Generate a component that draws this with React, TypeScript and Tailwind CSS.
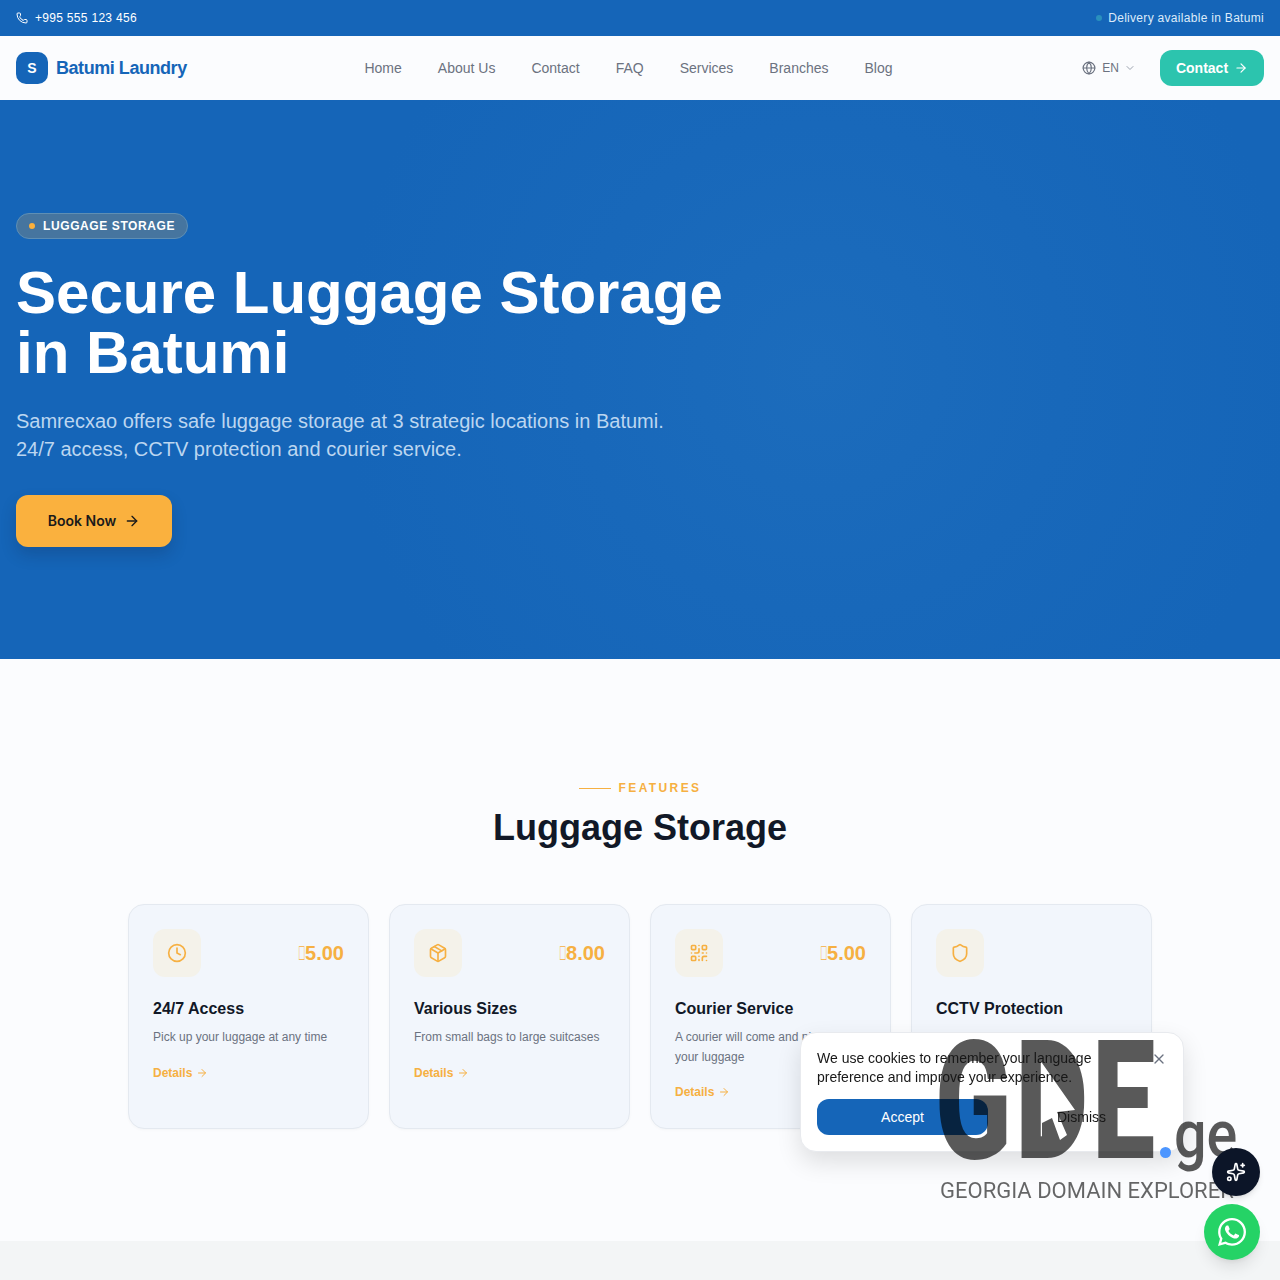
import { ArrowRight, ChevronDown, Clock, Globe, Package, Phone, QrCode, Shield, Sparkles, X } from "lucide-react";
import { FaWhatsapp } from "react-icons/fa";

const navLinks = ["Home", "About Us", "Contact", "FAQ", "Services", "Branches", "Blog"];

const features = [
  { title: "24/7 Access", text: "Pick up your luggage at any time", price: "5.00", Icon: Clock },
  { title: "Various Sizes", text: "From small bags to large suitcases", price: "8.00", Icon: Package },
  { title: "Courier Service", text: "A courier will come and pick up your luggage", price: "5.00", Icon: QrCode },
  { title: "CCTV Protection", text: "Your luggage is monitored around the clock", price: "", Icon: Shield },
];

const FeatureCard = ({ title, text, price, Icon }: (typeof features)[number]) => (
  <div className="rounded-2xl border border-[#e4e9f0] bg-[#f2f6fc] p-6 shadow-[0_1px_3px_rgba(15,23,42,0.03)]">
    <div className="flex items-center justify-between">
      <div className="flex h-12 w-12 items-center justify-center rounded-xl bg-[#f4f2ea]">
        <Icon className="h-5 w-5 text-[#f6b042]" strokeWidth={2} />
      </div>
      {price && (
        <span className="text-xl font-bold text-[#f6b042]">
          <span className="inline-block w-[7px] origin-left scale-x-50">{"\uE000"}</span>
          {price}
        </span>
      )}
    </div>
    <h3 className="mt-5 text-base leading-6 font-bold text-[#111827]">{title}</h3>
    <p className="mt-[7px] text-xs leading-[19.5px] text-[#6b7280]">{text}</p>
    <a className="mt-[15px] flex items-center gap-1 text-xs leading-5 font-bold text-[#f6b042]">
      Details <ArrowRight className="h-3 w-3" />
    </a>
  </div>
);

export default function App() {
  return (
    <div className="h-[1280px] overflow-hidden bg-[#fbfcfe] font-['Liberation_Sans',sans-serif]">
      {/* top bar */}
      <div className="flex h-9 items-center justify-between bg-[#1565b8] px-4 text-xs tracking-[0.3px] text-white">
        <div className="flex items-center gap-[7px]">
          <Phone className="h-3 w-3" />
          <span>+995 555 123 456</span>
        </div>
        <div className="flex items-center gap-1.5 text-[#dcebfa]">
          <span className="h-1.5 w-1.5 rounded-full bg-[#2a90bd]" />
          <span>Delivery available in Batumi</span>
        </div>
      </div>

      {/* nav */}
      <nav className="flex h-16 items-center justify-between bg-[#fbfcfe] px-4">
        <div className="flex w-[277px] items-center gap-2">
          <div className="flex h-8 w-8 items-center justify-center rounded-[10px] bg-[#1565b8] text-sm font-bold text-white">S</div>
          <span className="text-lg font-bold tracking-[-0.45px] text-[#1565b8]">Batumi Laundry</span>
        </div>
        <div className="flex items-center gap-9 text-sm text-[#6b7280]">
          {navLinks.map((link) => (
            <a key={link}>{link}</a>
          ))}
        </div>
        <div className="flex w-[300px] items-center justify-end">
          <div className="flex items-center text-xs text-[#6b7280]">
            <Globe className="mr-1.5 h-3.5 w-3.5" />
            <span className="mr-[5px]">EN</span>
            <ChevronDown className="h-3 w-3 text-[#9ca3af]" />
          </div>
          <button className="ml-6 flex h-9 w-[104px] items-center justify-center gap-1.5 rounded-xl bg-[#2cc4ae] text-sm font-bold text-white">
            Contact <ArrowRight className="h-3.5 w-3.5" />
          </button>
        </div>
      </nav>

      {/* hero */}
      <section className="h-[559px] bg-[#1565b8] bg-[radial-gradient(circle_at_64%_48%,#1c6cbc_0%,#1868ba_28%,#1565b8_55%)] px-4 pt-[113px]">
        <div className="flex h-[26px] w-[172px] items-center gap-2 rounded-full border border-[#5f8fb4] bg-[#46759f] pl-3 text-xs font-bold tracking-[0.6px] text-white">
          <span className="h-1.5 w-1.5 rounded-full bg-[#fbb03b]" />
          LUGGAGE STORAGE
        </div>
        <h1 className="mt-6 text-6xl leading-[60px] font-bold text-white">
          Secure Luggage Storage
          <br />
          in Batumi
        </h1>
        <p className="mt-6 text-xl leading-7 text-[#bcd6f0]">
          Samrecxao offers safe luggage storage at 3 strategic locations in Batumi.
          <br />
          24/7 access, CCTV protection and courier service.
        </p>
        <button className="mt-8 flex h-[52px] w-[156px] items-center justify-center gap-2 rounded-xl bg-[#fab13e] font-['Inter',sans-serif] text-sm font-semibold text-[#1a1a1a] shadow-[0_8px_16px_rgba(15,23,42,0.18)]">
          Book Now <ArrowRight className="h-4 w-4" />
        </button>
      </section>

      {/* features */}
      <section className="h-[582px] pt-[121px]">
        <div className="flex items-center justify-center gap-2">
          <span className="h-px w-8 bg-[#f6b042]" />
          <span className="text-xs leading-4 font-bold tracking-[2.4px] text-[#f6b042]">FEATURES</span>
        </div>
        <h2 className="mt-3 text-center text-4xl leading-10 font-bold text-[#111827]">Luggage Storage</h2>
        <div className="mx-auto mt-[56px] grid h-[225px] w-[1024px] grid-cols-4 gap-5">
          {features.map((feature) => (
            <FeatureCard key={feature.title} {...feature} />
          ))}
        </div>
      </section>

      <div className="h-[39px] bg-[#f3f5f6]" />

      {/* cookie panel: no stacking context of its own, so its texts sit over the watermark and the button under it */}
      <div className="absolute top-[1032px] left-[800px] h-[120px] w-[384px] rounded-2xl border border-[#e8eaee] bg-white p-4 shadow-[0_10px_25px_rgba(0,0,0,0.12)]">
        <div className="flex justify-between">
          <p className="relative z-30 w-[290px] text-sm leading-[19px] text-[#171717]">We use cookies to remember your language preference and improve your experience.</p>
          <X className="relative z-30 mt-0.5 h-4 w-4 text-[#6b7280]" />
        </div>
        <div className="mt-3 flex items-center">
          <button className="h-9 w-[171px] rounded-xl bg-[#1565b8] text-sm text-white">Accept</button>
          <span className="relative z-30 ml-[69px] text-sm text-[#171717]">Dismiss</span>
        </div>
      </div>

      {/* GDE.ge watermark */}
      <div className="pointer-events-none fixed top-[1030px] left-[935px] z-20 h-[175px] w-[310px]">
        <div className="absolute inset-0 opacity-65">
          <span className="absolute top-[-11.5px] left-0 origin-top-left scale-x-[0.68] font-['Roboto',sans-serif] text-[165px] leading-[165px] font-black tracking-[6px] text-black">GDE</span>
          {/* the D has no counter, only the pointer cut out of it */}
          <div className="absolute top-[30px] left-[107px] h-[78px] w-[30px] bg-black" />
        </div>
        <svg className="absolute top-[30px] left-[105px]" width="40" height="84" viewBox="0 0 40 84">
          <path d="M2 3 L35 50 L17 52 L27 75 L20 80 L12 58 L2 63 Z" fill="#ffffff" />
        </svg>
        <span className="absolute top-[117px] left-[225px] h-[11px] w-[11px] rounded-full bg-[#4d96ff]" />
        <span className="absolute top-[64.5px] left-[239px] origin-top-left scale-x-[0.87] font-['Roboto',sans-serif] text-[66px] leading-[80px] font-medium text-[#000000]/65">ge</span>
        <span className="absolute top-[147px] left-[5px] font-['Roboto',sans-serif] text-[22px] leading-7 whitespace-nowrap text-[#000000]/60">GEORGIA DOMAIN EXPLORER</span>
      </div>

      {/* floating buttons */}
      <button className="fixed top-[1148px] left-[1212px] z-40 flex h-12 w-12 items-center justify-center rounded-full bg-[#0c1528] text-white shadow-md">
        <Sparkles className="h-5 w-5" />
      </button>
      <button className="fixed top-[1204px] left-[1204px] z-40 flex h-14 w-14 items-center justify-center rounded-full bg-[#25d366] text-white shadow-lg">
        <FaWhatsapp className="h-8 w-8" />
      </button>
    </div>
  );
}
